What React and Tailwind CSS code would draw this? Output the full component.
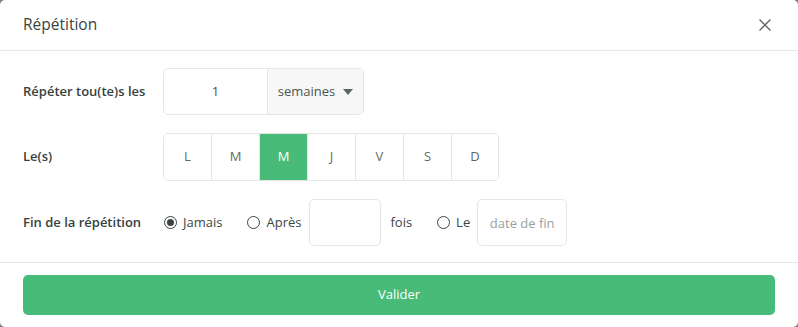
import { useState } from 'react';

const days = ['L', 'M', 'M', 'J', 'V', 'S', 'D'];

const Radio = ({ checked, label, onClick }) => (
  <button onClick={onClick} className="flex items-center gap-[6px] text-[13px] text-[#3b4643]">
    <span className="flex h-[13px] w-[13px] items-center justify-center rounded-full border-[1.5px] border-[#3b4643]">
      {checked && <span className="h-[7px] w-[7px] rounded-full bg-[#3b4643]" />}
    </span>
    <span>{label}</span>
  </button>
);

const App = () => {
  const [selected, setSelected] = useState(2);
  const [end, setEnd] = useState('never');

  return (
    <div className="h-[327px] w-[798px] bg-[#7d7d7d]" style={{ fontFamily: '"Open Sans", "Noto Sans", sans-serif' }}>
      <div className="flex h-full flex-col rounded-[5px] bg-white">
        <header className="flex h-[51px] items-center justify-between border-b border-[#e6e6e6] pl-[23px] pr-[26px]">
          <h1 className="text-[15.5px] font-medium text-[#3a4441]">Répétition</h1>
          <button className="text-[#5c6764]">
            <svg width="14" height="14" viewBox="0 0 14 14" fill="none" stroke="currentColor" strokeWidth="1.4">
              <path d="M1.5 1.5l11 11M12.5 1.5l-11 11" />
            </svg>
          </button>
        </header>

        <div className="flex flex-1 flex-col gap-[18px] px-[23px] pt-[17px]">
          <div className="flex items-center">
            <label className="w-[140px] text-[13px] font-semibold text-[#36413e]">Répéter tou(te)s les</label>
            <div className="flex h-[47px] overflow-hidden rounded-[5px] border border-[#e6e6e6]">
              <input
                defaultValue="1"
                className="w-[103px] text-center text-[13px] text-[#4a5451] outline-none"
              />
              <div className="flex w-[96px] items-center justify-center gap-[8px] border-l border-[#e6e6e6] bg-[#f7f7f7] text-[13px] text-[#4a5451]">
                <span>semaines</span>
                <svg width="10" height="6" viewBox="0 0 10 6"><path d="M0 0h10L5 6z" fill="#5c6764" /></svg>
              </div>
            </div>
          </div>

          <div className="flex items-center">
            <label className="w-[140px] text-[13px] font-semibold text-[#36413e]">Le(s)</label>
            <div className="flex h-[48px] overflow-hidden rounded-[5px] border border-[#e6e6e6]">
              {days.map((d, i) => (
                <button
                  key={i}
                  onClick={() => setSelected(i)}
                  className={
                    i === selected
                      ? 'w-[48px] border-l border-[#e6e6e6] bg-[#48bb78] text-[13px] text-white first:w-[47px] first:border-l-0 last:w-[47px]'
                      : 'w-[48px] border-l border-[#e6e6e6] bg-white text-[13px] text-[#5f6a67] first:w-[47px] first:border-l-0 last:w-[47px]'
                  }
                >
                  {d}
                </button>
              ))}
            </div>
          </div>

          <div className="flex items-center">
            <label className="w-[140px] text-[13px] font-semibold text-[#36413e]">Fin de la répétition</label>
            <div className="flex items-center pl-[1px]">
              <Radio checked={end === 'never'} label="Jamais" onClick={() => setEnd('never')} />
              <div className="ml-[25px]">
                <Radio checked={end === 'after'} label="Après" onClick={() => setEnd('after')} />
              </div>
              <input className="ml-[8px] h-[47px] w-[72px] rounded-[5px] border border-[#e6e6e6] text-center text-[13px] outline-none" />
              <span className="ml-[9px] text-[13px] text-[#3b4643]">fois</span>
              <div className="ml-[25px]">
                <Radio checked={end === 'date'} label="Le" onClick={() => setEnd('date')} />
              </div>
              <input
                placeholder="date de fin"
                className="ml-[7px] h-[47px] w-[90px] rounded-[5px] border border-[#e6e6e6] text-center text-[13px] outline-none placeholder:text-[#9aa19f]"
              />
            </div>
          </div>
        </div>

        <footer className="border-t border-[#e6e6e6] px-[23px] pb-[12px] pt-[12px]">
          <button className="h-[40px] w-full rounded-[5px] bg-[#48bb78] text-[13px] font-medium text-white">
            Valider
          </button>
        </footer>
      </div>
    </div>
  );
};

export default App;
